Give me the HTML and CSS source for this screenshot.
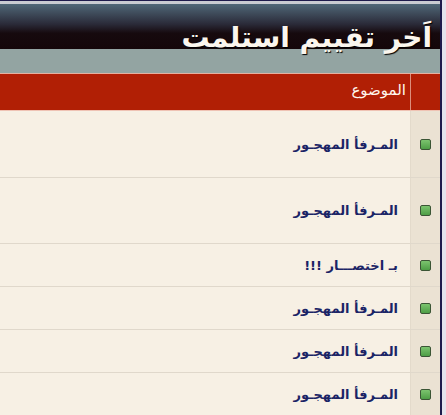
FILE: index.html
```html
<!DOCTYPE html>
<html lang="ar" dir="rtl">
<head>
    <meta charset="UTF-8">
    <title>اَخر تقييم استلمت</title>
    <link rel="stylesheet" href="styles.css">
</head>
<body>
    <div class="frame">
        <div class="title-box">
            <h1>اَخر تقييم استلمت</h1>
        </div>

        <div class="row head-row">
            <div class="icon-cell"></div>
            <div class="main-cell">الموضوع</div>
        </div>

        <div class="row tall first">
            <div class="icon-cell"><span class="dot"></span></div>
            <div class="main-cell"><a href="#">المـرفأ المهجـور</a></div>
        </div>
        <div class="row tall">
            <div class="icon-cell"><span class="dot"></span></div>
            <div class="main-cell"><a href="#">المـرفأ المهجـور</a></div>
        </div>
        <div class="row">
            <div class="icon-cell"><span class="dot"></span></div>
            <div class="main-cell"><a href="#">بـ اختصـــار !!!</a></div>
        </div>
        <div class="row">
            <div class="icon-cell"><span class="dot"></span></div>
            <div class="main-cell"><a href="#">المـرفأ المهجـور</a></div>
        </div>
        <div class="row">
            <div class="icon-cell"><span class="dot"></span></div>
            <div class="main-cell"><a href="#">المـرفأ المهجـور</a></div>
        </div>
        <div class="row">
            <div class="icon-cell"><span class="dot"></span></div>
            <div class="main-cell"><a href="#">المـرفأ المهجـور</a></div>
        </div>
    </div>
</body>
</html>
```

FILE: styles.css
```css
* {
    margin: 0;
    padding: 0;
    box-sizing: border-box;
}

body {
    font-family: 'DejaVu Sans', sans-serif;
    background-color: #e4e4ec;
    overflow: hidden;
}

.frame {
    margin-right: 4px;
    padding-top: 3px;
    border-top: 1px solid #1e1b4c;
    border-right: 2px solid #1e1b4c;
    background-color: #c9ccd2;
}

/* dark gradient strip on top of the grey band, title runs over both */
.title-box {
    height: 69px;
    padding-right: 8px;
    background-color: #93a4a2;
    background-image: linear-gradient(to bottom, #506878 0%, #2a2a38 45%, #160a0e 65%, #140609 100%);
    background-size: 100% 45px;
    background-repeat: no-repeat;
}

.title-box h1 {
    color: #fbf6ee;
    font-size: 28px;
    font-weight: bold;
    line-height: 1;
    padding-top: 20px;
    text-shadow: 1px 1px 1px #000;
    white-space: nowrap;
}

.row {
    display: flex;
    height: 43px;
    border-bottom: 1px solid #e0d8cb;
}

.row.tall {
    height: 66px;
}

.row.first {
    height: 67px;
}

.icon-cell {
    width: 30px;
    flex-shrink: 0;
    display: flex;
    align-items: center;
    justify-content: center;
    background-color: #ebe2d3;
    border-left: 1px solid #e3dacb;
}

.main-cell {
    flex: 1;
    display: flex;
    align-items: center;
    padding-right: 12px;
    background-color: #f7f0e4;
}

.main-cell a {
    color: #1b2466;
    font-size: 13px;
    font-weight: bold;
    text-decoration: none;
}

.head-row {
    height: 38px;
    border-top: 1px solid #e6b0a0;
    border-bottom: 1px solid #efc3b4;
}

.head-row .icon-cell,
.head-row .main-cell {
    background-color: #b11f05;
}

.head-row .icon-cell {
    border-left: 1px solid #dc8e7c;
}

.head-row .main-cell {
    color: #fff6ee;
    font-size: 15px;
    padding-right: 4px;
    padding-bottom: 4px;
}

.dot {
    width: 11px;
    height: 11px;
    border: 1px solid #3b5535;
    border-radius: 2px;
    background: linear-gradient(to bottom, #7cc46f, #4e9e46);
}
```
